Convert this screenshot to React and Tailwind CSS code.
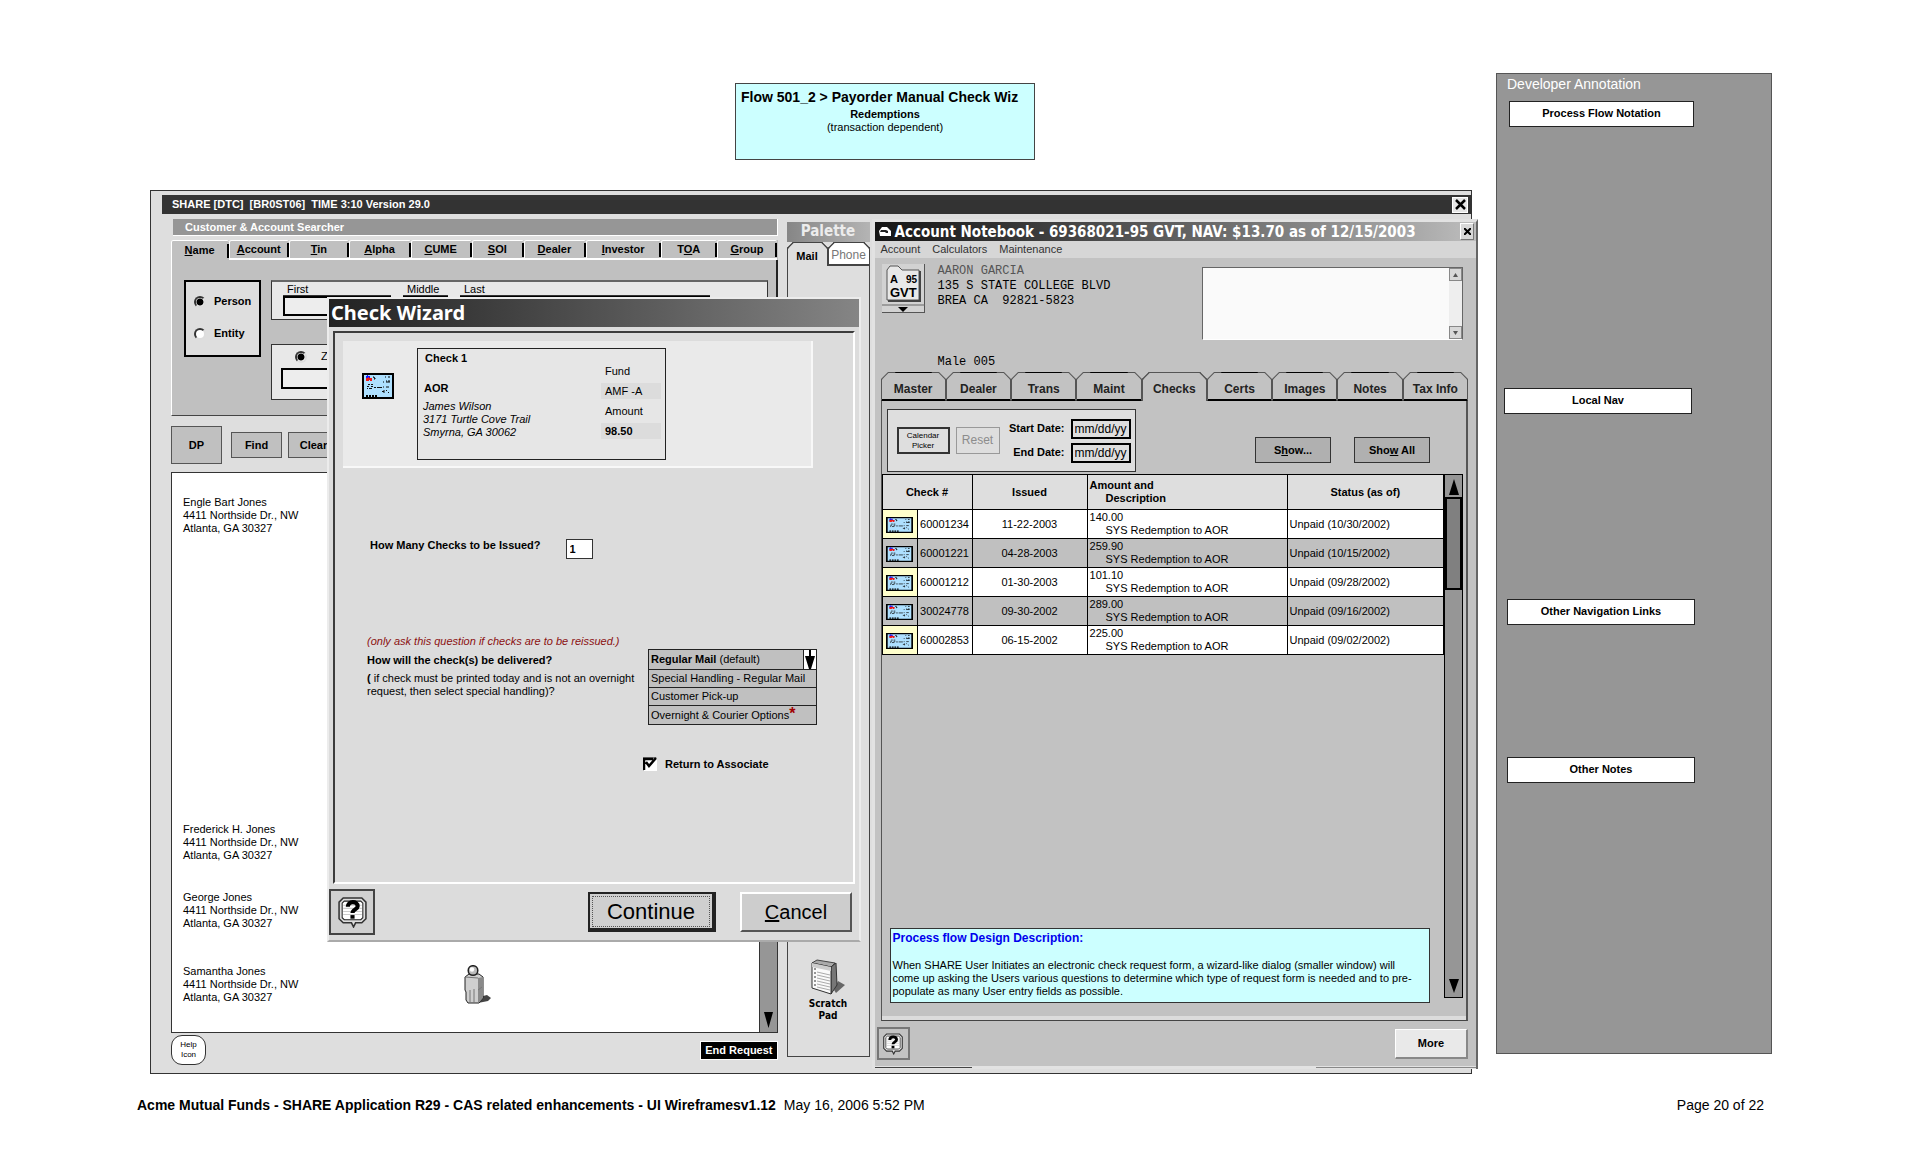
import React from 'react';

const searchTabs = [
    ['', 'N', 'ame'],
    ['', 'A', 'ccount'],
    ['', 'T', 'in'],
    ['', 'A', 'lpha'],
    ['', 'C', 'UME'],
    ['', 'S', 'OI'],
    ['', 'D', 'ealer'],
    ['', 'I', 'nvestor'],
    ['T', 'O', 'A'],
    ['', 'G', 'roup'],
];

const notebookTabs = ['Master', 'Dealer', 'Trans', 'Maint', 'Checks', 'Certs', 'Images', 'Notes', 'Tax Info'];

const checks = [
    { number: '60001234', issued: '11-22-2003', amount: '140.00', status: 'Unpaid (10/30/2002)' },
    { number: '60001221', issued: '04-28-2003', amount: '259.90', status: 'Unpaid (10/15/2002)' },
    { number: '60001212', issued: '01-30-2003', amount: '101.10', status: 'Unpaid (09/28/2002)' },
    { number: '30024778', issued: '09-30-2002', amount: '289.00', status: 'Unpaid (09/16/2002)' },
    { number: '60002853', issued: '06-15-2002', amount: '225.00', status: 'Unpaid (09/02/2002)' },
];

const CheckIcon = ({ className }) => (
    <svg className={className} viewBox="0 0 32 26" preserveAspectRatio="none" aria-hidden="true">
        <rect x="1" y="1" width="30" height="24" fill="#aee0ff" stroke="#000" strokeWidth="2" />
        <path d="M4 3h1v-1h1v1h2v2h2v1H4z" fill="#1a1aff" />
        <path d="M4 5h2v-1h1v1h3v3H8v-1H7v1H4z" fill="#f01818" />
        <path d="M11 4h1v1h1v1h-1M23 4h1M26 4h2M21 9h1M24 8h1M26 8h2M24 9h4" stroke="#000" fill="none" />
        <path d="M6 11.500h2M9 11.500h2M5 13.500h2M9 13.500h2M5 15.500h1M7 15.500h3M12 14.500h2M15 14.500h5M21 14h1M24 14h3M20 18.500h2M22 17v3M24 17l1 1M26 19l1 1" stroke="#111" fill="none" />
        <path d="M4 23h2M7 23h2M10 23h2M14 22v2" stroke="#000" strokeWidth="2" fill="none" />
    </svg>
);

const HelpIcon = ({ className }) => (
    <svg className={className} viewBox="0 0 28 30" aria-hidden="true">
        <path d="M5 1h18l4 4v16l-4 4h-6l-2 4-2-4H5l-4-4V5z" fill="#ddd" stroke="#333" strokeWidth="1.500" />
        <path d="M6 4h16l2 2v14l-2 2H6l-2-2V6z" fill="#fff" stroke="#222" />
        <path d="M5 8h18M5 11h18M5 14h18M5 17h18" stroke="#ccc" />
        <path d="M9.500 9.500c0-6 9.500-6 9.500-.5 0 3-5 3-5 6.500" fill="none" stroke="#000" strokeWidth="4" />
        <path d="M12 17.500h4v3.500h-4z" fill="#000" />
    </svg>
);

const PersonIcon = () => (
    <svg className="w-7 h-10" viewBox="0 0 28 40" aria-hidden="true">
        <path d="M15 38l5-7 4-1 4 3-3 3z" fill="#444" />
        <path d="M2 12l4-3h10l4 3v21l-4 5H5l-2-3v-8l-1-2z" fill="#cfcfcf" stroke="#222" />
        <path d="M15 13l5-1v21l-5 5z" fill="#8a8a8a" />
        <path d="M7 25v12M11 24v14M2 12l13 1M15 25l4-3" stroke="#777" fill="none" />
        <circle cx="10" cy="5.500" r="4.800" fill="#bbb" stroke="#222" strokeWidth="1.500" />
        <circle cx="9" cy="4.500" r="2.200" fill="#fff" />
    </svg>
);

const ScratchPadIcon = () => (
    <svg className="w-9 h-9" viewBox="0 0 36 36" aria-hidden="true">
        <path d="M24 31l4-9 7 4-9 8z" fill="#666" />
        <path d="M2 4l5-3 18 3-4 4z" fill="#aaa" stroke="#444" />
        <path d="M21 8l5-4 1 22-6 9z" fill="#777" stroke="#333" />
        <path d="M2 4l19 4v27L2 29z" fill="#fafafa" stroke="#333" />
        <path d="M2 4l19 4v4L2 8z" fill="#ccc" />
        <path d="M7 13l13 3M7 16l13 3M7 19l13 3M7 22l13 3M7 25l13 3M7 28l13 3" stroke="#aaa" />
        <path d="M5 9v20" stroke="#333" strokeDasharray="2 2" />
    </svg>
);

const Arrow = ({ up, className }) => (
    <svg className={className} viewBox="0 0 10 14" preserveAspectRatio="none" aria-hidden="true">
        <path d={up ? 'M5 0L10 14H0z' : 'M5 14L0 0h10z'} fill="#000" />
    </svg>
);

const Customer = ({ name, className = '', children }) => (
    <li className={`flex ${className}`}>
        <address className="not-italic w-[280px] shrink-0">
            {name}<br />4411 Northside Dr., NW<br />Atlanta, GA 30327
        </address>
        {children}
    </li>
);

const Searcher = () => (
    <section className="min-w-0 flex flex-col pb-2">
        <h2 className="h-[17px] ml-[2px] bg-[#969696] border-b border-r border-white text-white font-bold leading-[16px] pl-3">
            Customer &amp; Account Searcher
        </h2>
        <div role="tablist" className="mt-1 grid grid-cols-[58fr_60fr_60fr_61fr_61fr_52fr_62fr_75fr_56fr_60fr] bg-[#c0c0c0]">
            {searchTabs.map(([before, key, after], i) => (
                <button
                    key={before + key + after}
                    role="tab"
                    aria-selected={i === 0}
                    className={`h-[20px] font-bold border-t border-l border-white rounded-t-[2px] ${i === 0 ? '' : 'border-b-2'}`}
                >
                    <span className="flex h-[14px] items-center justify-center border-r-2 border-black">
                        <span>{before}<u>{key}</u>{after}</span>
                    </span>
                </button>
            ))}
        </div>
        <div className="h-[156px] bg-[#c0c0c0] border-l border-l-white border-b border-b-[#444] border-r-2 border-r-[#222] pt-5 pl-3 pr-2 flex gap-[10px] items-start">
            <fieldset className="w-[77px] h-[77px] shrink-0 border-2 border-black bg-[#dedede] flex flex-col gap-[19px] pt-[13px] pl-2">
                {['Person', 'Entity'].map((kind) => (
                    <label key={kind} className="flex items-center gap-2 font-bold">
                        <input type="radio" name="kind" defaultChecked={kind === 'Person'} className="appearance-none size-3 rounded-full bg-white border-2 border-[#333] border-r-[#ddd] border-b-[#ddd] checked:bg-[radial-gradient(black_3px,white_4px)]" />
                        {kind}
                    </label>
                ))}
            </fieldset>
            <div className="flex-1 flex flex-col gap-6">
                <div className="h-[40px] border border-[#333] border-t-2 border-t-[#666] bg-[#e8e8e8] pt-px pl-[11px]">
                    <div className="flex gap-3 leading-[12px]">
                        <label htmlFor="first" className="w-[108px] pl-1 border-b border-[#333]">First</label>
                        <label htmlFor="middle" className="w-[45px] pl-1 border-b border-[#333]">Middle</label>
                        <label htmlFor="last" className="w-[250px] pl-1 border-b border-[#333]">Last</label>
                    </div>
                    <div className="flex gap-3">
                        <input id="first" className="w-[108px] h-[20px] border-2 border-black bg-[#ededed]" />
                        <input id="middle" className="w-[45px] h-[20px] border-2 border-black bg-[#ededed]" />
                        <input id="last" className="w-[250px] h-[20px] border-2 border-black bg-[#ededed]" />
                    </div>
                </div>
                <div className="h-[56px] border border-[#333] bg-[#e8e8e8] pt-[5px] pl-[9px]">
                    <label className="flex items-center gap-[14px] pl-[14px]">
                        <input type="radio" name="lookup" defaultChecked className="appearance-none size-3 rounded-full bg-white border-2 border-[#333] border-r-[#ddd] border-b-[#ddd] checked:bg-[radial-gradient(black_3px,white_4px)]" />
                        Zip
                    </label>
                    <input aria-label="Zip" className="mt-[5px] w-[108px] h-[21px] border-2 border-black bg-[#ededed]" />
                </div>
            </div>
        </div>
        <div className="mt-[10px] flex items-center gap-[6px] font-bold">
            <button className="w-[51px] h-[38px] mr-[3px] bg-[#c0c0c0] border border-[#555]">DP</button>
            <button className="w-[51px] h-[26px] bg-[#c0c0c0] border border-[#555]">Find</button>
            <button className="w-[51px] h-[26px] bg-[#c0c0c0] border border-[#555]">Clear</button>
        </div>
        <div className="mt-2 flex-1 flex bg-white border border-[#333]">
            <ul className="flex-1 pt-[23px] pl-[11px]">
                <Customer name="Engle Bart Jones" className="mb-[288px]" />
                <Customer name="Frederick H. Jones" className="mb-[29px]" />
                <Customer name="George Jones" className="mb-[35px]" />
                <Customer name="Samantha Jones"><PersonIcon /></Customer>
            </ul>
            <div className="w-[18px] bg-[#969696] border-l border-[#333] flex flex-col justify-end items-center pb-1">
                <Arrow className="w-[9px] h-4" />
            </div>
        </div>
        <div className="mt-[2px] flex justify-between items-center">
            <button className="w-[35px] h-[30px] rounded-[11px] border border-[#333] bg-white text-[8px] leading-[10px]">Help<br />Icon</button>
            <button className="h-[19px] px-1 bg-black border border-white text-white font-bold">End Request</button>
        </div>
    </section>
);

const Palette = () => (
    <section className="ml-[9px] mb-4 flex flex-col">
        <h2 className="mt-[3px] h-[20px] bg-linear-to-r from-[#868686] to-[#b4b4b4] text-[#ececec] text-center text-[15px] leading-[19px] font-bold font-['DejaVu_Sans_Condensed','DejaVu_Sans',sans-serif]">Palette</h2>
        <div role="tablist" className="flex h-6">
            <button role="tab" aria-selected="true" className="w-[41px] border border-b-0 border-[#444] rounded-t-[6px] [corner-shape:bevel] font-bold pt-1">Mail</button>
            <button role="tab" aria-selected="false" className="flex-1 bg-white border border-b-2 border-[#444] rounded-t-[6px] [corner-shape:bevel] text-[#777] text-[12px] pt-1">Phone</button>
        </div>
        <div className="flex-1 border border-t-0 border-[#444] flex flex-col justify-end items-center pb-[34px]">
            <button className="flex flex-col items-center font-bold leading-[12px] text-[10px] font-['DejaVu_Sans_Condensed','DejaVu_Sans',sans-serif]">
                <ScratchPadIcon />
                <span className="mt-[3px]">Scratch<br />Pad</span>
            </button>
        </div>
    </section>
);

const ChecksTable = () => (
    <table className="w-full table-fixed border-collapse bg-white">
        <colgroup>
            <col className="w-[35px]" />
            <col className="w-[55px]" />
            <col className="w-[115px]" />
            <col className="w-[200px]" />
            <col />
        </colgroup>
        <thead>
            <tr className="h-[35px] bg-[#dedede]">
                <th colSpan={2} className="border border-black">Check #</th>
                <th className="border border-black">Issued</th>
                <th className="border border-black text-left pl-[2px]">Amount and<span className="block pl-4">Description</span></th>
                <th className="border border-black">Status (as of)</th>
            </tr>
        </thead>
        <tbody>
            {checks.map((check, i) => (
                <tr key={check.number} className={`h-[29px] ${i % 2 ? 'bg-[#c0c0c0]' : 'bg-white'}`}>
                    <td className={`border border-black ${i % 2 ? '' : 'bg-[#ffffcc]'}`}><CheckIcon className="w-[27px] h-4 mx-auto mt-[2px]" /></td>
                    <td className="border border-black text-center">{check.number}</td>
                    <td className="border border-black text-center">{check.issued}</td>
                    <td className="border border-black pl-[2px]">{check.amount}<span className="block pl-4">SYS Redemption to AOR</span></td>
                    <td className="border border-black pl-[2px]">{check.status}</td>
                </tr>
            ))}
        </tbody>
    </table>
);

const Notebook = () => (
    <section className="min-w-0 ml-[2px] -mr-[7px] mb-[4px] flex flex-col bg-[#c2c2c2] border-t-[3px] border-l-[3px] border-[#e2e2e2] border-r-2 border-r-[#666]">
        <header className="h-[19px] flex items-center justify-between bg-linear-to-r from-[#151515] via-[#707070] via-60% to-[#bdbdbd] text-white pl-1 pr-[2px]">
            <div className="flex items-center gap-1">
                <svg className="w-3 h-[11px]" viewBox="0 0 12 11" aria-hidden="true">
                    <path d="M0 5l3-4h5l4 4v5H1z" fill="#fff" />
                    <path d="M2 4h5l2 1v2H7L6 6H1z" fill="#222" />
                </svg>
                <h2 className="text-[15px] leading-[18px] font-bold whitespace-nowrap font-['DejaVu_Sans_Condensed','DejaVu_Sans',sans-serif]">
                    Account Notebook - 69368021-95 GVT, NAV: $13.70 as of 12/15/2003
                </h2>
            </div>
            <button aria-label="Close notebook" className="w-[14px] h-[17px] bg-[#d8d8d8] border border-[#777] border-t-white border-l-white flex items-center justify-center">
                <svg className="w-[7px] h-[7px]" viewBox="0 0 7 7" aria-hidden="true"><path d="M0 0l7 7M7 0L0 7" stroke="#000" strokeWidth="2" /></svg>
            </button>
        </header>
        <nav className="h-[17px] bg-[#d6d6d6] text-[#333] leading-[16px] flex gap-3 pl-[6px]">
            <a href="#account">Account</a>
            <a href="#calculators">Calculators</a>
            <a href="#maintenance">Maintenance</a>
        </nav>
        <div className="h-[114px] pt-[6px] pl-[7px] pr-[13px] flex">
            <button aria-label="A 95 GVT" className="w-[43px] h-[49px] shrink-0">
                <svg className="w-full h-full font-['Liberation_Sans',sans-serif] font-bold" viewBox="0 0 43 49" aria-hidden="true">
                    <path d="M0 0h43v49H0z" fill="#d2d2d2" />
                    <path d="M0 49h43V0" fill="none" stroke="#555" strokeWidth="2" />
                    <path d="M5 36V6l3-4h8l4 4h17v30z" fill="#e8e8e8" stroke="#555" />
                    <path d="M6 37h32V7" fill="none" stroke="#444" strokeWidth="2" />
                    <path d="M0 41h43" stroke="#666" />
                    <path d="M16 43h10l-5 5z" fill="#000" />
                    <text x="8" y="19" fontSize="11">A</text>
                    <text x="24" y="19" fontSize="10">95</text>
                    <text x="8" y="33" fontSize="13">GVT</text>
                </svg>
            </button>
            <div className="ml-[13px] font-['Liberation_Mono',monospace] text-[12px] leading-[15px] whitespace-pre">
                <p className="text-[#555]">AARON GARCIA</p>
                <p>135 S STATE COLLEGE BLVD</p>
                <p>{'BREA CA  92821-5823'}</p>
                <p className="mt-[46px]">Male 005</p>
            </div>
            <div className="ml-auto mt-[3px] w-[261px] h-[73px] flex bg-[#fafafa] border border-[#666] border-b-white">
                <textarea aria-label="Account notes" className="flex-1 resize-none outline-none" />
                <div className="w-[13px] bg-[#eee] flex flex-col justify-between">
                    <span className="h-[13px] bg-[#d8d8d8] border border-[#888] flex items-center justify-center"><Arrow up className="w-[5px] h-1 opacity-60" /></span>
                    <span className="h-[13px] bg-[#d8d8d8] border border-[#888] flex items-center justify-center"><Arrow className="w-[5px] h-1 opacity-60" /></span>
                </div>
            </div>
        </div>
        <div role="tablist" className="ml-[6px] mr-2 h-[29px] flex">
            {notebookTabs.map((tab) => (
                <button
                    key={tab}
                    role="tab"
                    aria-selected={tab === 'Checks'}
                    className={`flex-1 basis-0 font-bold text-[#222] text-[12px] border border-[#555] rounded-t-[7px] [corner-shape:bevel] pt-[6px] ${tab === 'Checks' ? 'border-b-0 pb-[2px]' : 'border-b-2 border-b-black'}`}
                >
                    {tab}
                </button>
            ))}
        </div>
        <div className="flex-1 ml-[6px] mr-2 flex flex-col border-l border-r-2 border-[#555] border-b border-b-[#444]">
            <div className="mt-2 mb-[2px] ml-[5px] mr-9 flex items-end justify-between">
                <div className="w-[249px] h-[63px] flex items-center bg-[#dedede] border border-[#333] pl-[9px] pr-1">
                    <button className="w-[53px] h-[27px] mr-[6px] border-2 border-[#333] text-[8px] leading-[10px]">Calendar<br />Picker</button>
                    <button disabled className="w-[44px] h-[27px] border border-[#999] text-[#8c8c8c] text-[12px]">Reset</button>
                    <div className="ml-auto flex flex-col gap-1 items-end font-bold">
                        <label className="flex items-center gap-[6px]">
                            Start Date:
                            <input defaultValue="mm/dd/yy" className="w-[60px] h-[20px] px-[2px] border-2 border-black font-normal text-[12px]" />
                        </label>
                        <label className="flex items-center gap-[6px]">
                            End Date:
                            <input defaultValue="mm/dd/yy" className="w-[60px] h-[20px] px-[2px] border-2 border-black font-normal text-[12px]" />
                        </label>
                    </div>
                </div>
                <div className="mb-[9px] flex gap-[23px] font-bold">
                    <button className="w-[76px] h-[26px] bg-[#b0b0b0] border border-[#333]">S<u>h</u>ow...</button>
                    <button className="w-[76px] h-[26px] bg-[#b0b0b0] border border-[#333]">Sho<u>w</u> All</button>
                </div>
            </div>
            <div className="flex-1 flex pr-[3px]">
                <div className="flex-1 flex flex-col justify-between">
                    <ChecksTable />
                    <article className="ml-2 mr-[14px] mb-[13px] h-[75px] bg-[#ccffff] border border-[#333] pl-[2px] pr-[14px] pt-[2px]">
                        <h3 className="text-[12px] leading-[14px] font-bold text-[#0000ee] mb-[14px]">Process flow Design Description:</h3>
                        <p>
                            When SHARE User Initiates an electronic check request form, a wizard-like dialog (smaller window) will
                            come up asking the Users various questions to determine which type of request form is needed and to pre-populate as many User entry fields as possible.
                        </p>
                    </article>
                </div>
                <div className="w-[19px] mb-[18px] bg-[#969696] border border-black flex flex-col items-center">
                    <Arrow up className="w-[10px] h-4 mt-1 mb-[2px]" />
                    <div className="w-full h-[93px] bg-[#808080] border-2 border-black" />
                    <Arrow className="w-[10px] h-[14px] mt-auto mb-1" />
                </div>
            </div>
            <div className="h-1 bg-[#dcdcdc]" />
        </div>
        <footer className="h-[45px] flex items-center justify-between pl-[2px] pr-2">
            <button aria-label="Help" className="w-[33px] h-[33px] border-2 border-[#777] flex items-center justify-center"><HelpIcon className="w-5 h-[22px]" /></button>
            <button className="w-[73px] h-[30px] bg-[#e9e9e9] border border-b-2 border-r-2 border-[#888] border-t-white border-l-white font-bold">More</button>
        </footer>
        <div className="h-[3px] bg-[#e2e2e2] flex items-center">
            <div className="w-[97px] h-px bg-[#444]" />
            <div className="ml-auto w-[160px] h-px bg-[#888]" />
        </div>
    </section>
);

const CheckWizard = () => (
    <section role="dialog" aria-label="Check Wizard" className="absolute left-[176px] top-[106px] w-[534px] bg-[#dcdcdc] border-2 border-[#ececec] border-b-2 border-b-[#aaa]">
        <h2 className="h-[28px] bg-linear-to-r from-[#222] to-[#858585] text-white text-[20px] leading-[27px] font-bold pl-[2px] font-['Noto_Sans',sans-serif]">Check Wizard</h2>
        <div className="mt-1 mx-1 h-[553px] border-2 border-[#3c3c3c] border-r-white border-b-white pt-2 pl-2 pr-[40px]">
            <div className="h-[127px] bg-[#eaeaea] border-r-2 border-b-2 border-[#f8f8f8] flex items-start">
                <CheckIcon className="ml-[19px] mt-8 w-8 h-[26px]" />
                <div className="ml-[23px] mt-[7px] w-[249px] h-[112px] bg-[#e6e6e6] border border-[#222] flex justify-between pl-[5px] pr-1">
                    <div className="pt-[3px]">
                        <h3 className="font-bold pl-[2px]">Check 1</h3>
                        <h4 className="font-bold mt-[17px] mb-[5px] pl-px">AOR</h4>
                        <address className="italic">James Wilson<br />3171 Turtle Cove Trail<br />Smyrna, GA 30062</address>
                    </div>
                    <dl className="w-[60px] pt-4 *:pl-1">
                        <dt>Fund</dt>
                        <dd className="mt-[5px] bg-[#dcdcdc] leading-[16px]">AMF -A</dd>
                        <dt className="mt-[6px]">Amount</dt>
                        <dd className="mt-[5px] bg-[#dcdcdc] leading-[16px] font-bold">98.50</dd>
                    </dl>
                </div>
            </div>
            <div className="mt-[71px] ml-[27px] flex items-start gap-[25px]">
                <label htmlFor="check-count" className="font-bold">How Many Checks to be Issued?</label>
                <input id="check-count" defaultValue="1" className="w-[27px] h-[20px] bg-white border border-[#333] px-[3px] font-bold" />
            </div>
            <div className="mt-[76px] ml-6 flex items-start">
                <div className="w-[281px] shrink-0">
                    <p className="italic text-[#8b1010] whitespace-nowrap">(only ask this question if checks are to be reissued.)</p>
                    <p id="delivery" className="mt-[6px] mb-[5px] font-bold">How will the check(s) be delivered?</p>
                    <p><b>(</b> if check must be printed today and is not an overnight request, then select special handling)?</p>
                </div>
                <div className="mt-[14px] w-[169px] shrink-0 bg-[#c0c0c0] border border-[#222]">
                    <button aria-haspopup="listbox" aria-expanded="true" className="w-full h-[19px] flex items-center justify-between pl-[2px]">
                        <span><b>Regular Mail</b> (default)</span>
                        <span className="w-[13px] h-full border-l border-[#222] bg-white flex justify-center">
                            <svg className="w-[10px] h-[19px]" viewBox="0 0 10 19" aria-hidden="true"><path d="M4 0h2v6h4L6 19H4L0 6h4z" fill="#000" /></svg>
                        </span>
                    </button>
                    <ul role="listbox" aria-labelledby="delivery" className="*:border-t *:border-[#222] *:pl-[2px] *:leading-[17px] *:whitespace-nowrap">
                        <li role="option" aria-selected="false">Special Handling - Regular Mail</li>
                        <li role="option" aria-selected="false">Customer Pick-up</li>
                        <li role="option" aria-selected="false" className="flex h-[19px] pt-px">Overnight &amp; Courier Options<b className="text-[#a00000] text-[16px] leading-[14px]">*</b></li>
                    </ul>
                </div>
            </div>
            <label className="mt-8 ml-[300px] flex items-center gap-2 font-bold">
                <span className="relative flex">
                    <input type="checkbox" defaultChecked className="appearance-none w-[14px] h-[14px] bg-white border-2 border-[#777] border-r-white border-b-white" />
                    <svg className="absolute inset-0 w-[14px] h-[14px] pointer-events-none" viewBox="0 0 14 14" aria-hidden="true"><path d="M1 13V2h9M3 5l3 4 7-8" fill="none" stroke="#000" strokeWidth="2.500" /></svg>
                </span>
                Return to Associate
            </label>
        </div>
        <footer className="h-[56px] flex items-center pr-[7px]">
            <button aria-label="Help" className="w-[46px] h-[46px] border-2 border-[#444] bg-[#d0d0d0] flex items-center justify-center"><HelpIcon className="w-[29px] h-[31px]" /></button>
            <button className="ml-auto w-[128px] h-[40px] border-2 border-r-4 border-b-4 border-[#222] bg-[#cfcfcf] p-[2px] text-[22px] leading-[29px]">
                <span className="block border border-dotted border-[#555]">Continue</span>
            </button>
            <button className="ml-6 w-[112px] h-[40px] border-2 border-[#555] border-t-white border-l-white bg-[#cdcdcd] text-[20px]"><u>C</u>ancel</button>
        </footer>
    </section>
);

const notes = [
    { title: 'Process Flow Notation', className: 'ml-3 mt-[9px] w-[185px]' },
    { title: 'Local Nav', className: 'ml-[7px] mt-[261px] w-[188px]' },
    { title: 'Other Navigation Links', className: 'ml-[10px] mt-[185px] w-[188px]' },
    { title: 'Other Notes', className: 'ml-[10px] mt-[132px] w-[188px]' },
];

const DeveloperAnnotation = () => (
    <aside className="w-[276px] shrink-0 ml-6 mb-5 bg-[#969696] border border-[#555]">
        <h2 className="pl-[10px] pt-[2px] text-[14px] leading-[16px] text-white">Developer Annotation</h2>
        {notes.map(({ title, className }) => (
            <h3 key={title} className={`h-[26px] bg-white border border-[#222] text-center font-bold leading-[22px] ${className}`}>{title}</h3>
        ))}
    </aside>
);

const App = () => {
    return (
        <div className="min-h-screen flex flex-col bg-white text-black pt-[73px] pb-[51px] pl-[137px] pr-[148px] font-['Liberation_Sans',Arial,sans-serif] text-[11px] leading-[13px]">
            <div className="flex-1 flex pl-[13px]">
                <main className="flex-1 min-w-0 flex flex-col">
                    <div className="self-center ml-[148px] mt-[10px] w-[300px] h-[77px] bg-[#ccffff] border border-[#444] text-center pt-[5px]">
                        <h1 className="text-[14px] leading-[16px] font-bold text-left pl-[5px]">Flow 501_2 &gt; Payorder Manual Check Wiz</h1>
                        <p className="font-bold mt-[3px]">Redemptions</p>
                        <p>(transaction dependent)</p>
                    </div>
                    <div className="relative mt-[30px] flex-1 flex flex-col bg-[#dedede] border border-[#333]">
                        <header className="mt-1 ml-[11px] h-[19px] bg-[#333] flex items-center justify-between text-white font-bold pl-[10px] pr-[3px]">
                            <span className="whitespace-pre">{'SHARE [DTC]  [BR0ST06]  TIME 3:10 Version 29.0'}</span>
                            <button aria-label="Close" className="w-4 h-4 bg-[#e6e6e6] border border-white flex items-center justify-center">
                                <svg className="w-[11px] h-[11px]" viewBox="0 0 11 11" aria-hidden="true"><path d="M1 1l9 9M10 1l-9 9" stroke="#000" strokeWidth="2.500" /></svg>
                            </button>
                        </header>
                        <div className="mt-[5px] ml-5 flex-1 grid grid-cols-[minmax(0,606fr)_92px_minmax(0,601fr)]">
                            <Searcher />
                            <Palette />
                            <Notebook />
                        </div>
                        <CheckWizard />
                    </div>
                </main>
                <DeveloperAnnotation />
            </div>
            <footer className="mt-[21px] flex text-[14px] leading-[20px]">
                <strong>Acme Mutual Funds - SHARE Application R29 - CAS related enhancements - UI Wireframesv1.12</strong>
                <span className="ml-2">May 16, 2006 5:52 PM</span>
                <span className="ml-auto mr-2">Page 20 of 22</span>
            </footer>
        </div>
    );
};

export default App;
